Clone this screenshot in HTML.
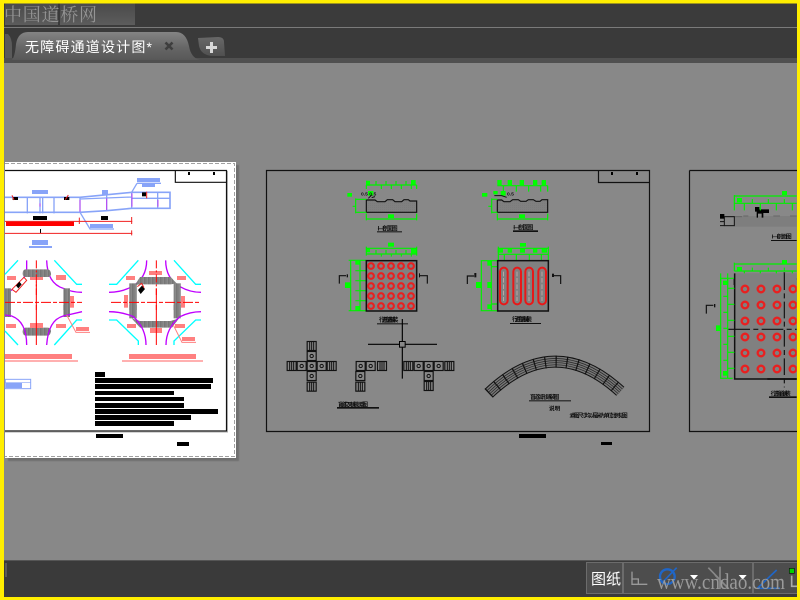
<!DOCTYPE html>
<html><head><meta charset="utf-8"><style>
html,body{margin:0;padding:0;background:#888}
body{width:800px;height:600px;overflow:hidden;position:relative}
svg{position:absolute;left:0;top:0;display:block}
text{font-family:"Liberation Sans","Noto Sans CJK SC",sans-serif}
g text{font-weight:700}
</style></head><body>
<svg width="800" height="600" viewBox="0 0 800 600" xmlns="http://www.w3.org/2000/svg">
<defs>
<linearGradient id="wm" x1="0" y1="0" x2="0" y2="1"><stop offset="0" stop-color="#4a4a4a"/><stop offset="1" stop-color="#5c5c5c"/></linearGradient>
<linearGradient id="tab" x1="0" y1="0" x2="0" y2="1"><stop offset="0" stop-color="#848484"/><stop offset=".55" stop-color="#666"/><stop offset="1" stop-color="#585858"/></linearGradient>
<linearGradient id="pl" x1="0" y1="0" x2="0" y2="1"><stop offset="0" stop-color="#686868"/><stop offset="1" stop-color="#505050"/></linearGradient>
<filter id="b"><feGaussianBlur stdDeviation="0.6"/></filter>
<pattern id="r1" x="318" y="288" width="30" height="30" patternUnits="userSpaceOnUse"><circle cx="15" cy="15" r="8.500" fill="none" stroke="#e82020" stroke-width="6.500"/></pattern>
<pattern id="r2" x="171" y="3" width="48" height="48" patternUnits="userSpaceOnUse"><circle cx="24" cy="24" r="10" fill="none" stroke="#e82020" stroke-width="7"/></pattern>
<pattern id="tex" width="6" height="6" patternUnits="userSpaceOnUse"><rect width="6" height="6" fill="#808080"/><rect x="1" y="1" width="2" height="2" fill="#767676"/></pattern>
<pattern id="vs2" width="4" height="4" patternUnits="userSpaceOnUse"><rect width="4" height="4" fill="#9a9a9a"/><rect width="2" height="4" fill="#666"/></pattern>
<g id="cell"><rect x="1.500" y="1.500" width="27" height="27" fill="none" stroke="#111" stroke-width="3.500"/><circle cx="15" cy="15" r="5" fill="none" stroke="#111" stroke-width="3"/></g>
<g id="hv"><rect x="1.500" y="1.500" width="27" height="27" fill="none" stroke="#111" stroke-width="3.500"/><path d="M9,2V28M15,2V28M21,2V28" stroke="#111" stroke-width="3"/></g>
</defs>

<rect width="800" height="600" fill="#888"/>

<!-- top bar -->
<rect x="0" y="0" width="800" height="27" fill="#3b3b3b"/>
<rect x="5" y="3" width="130" height="22" fill="url(#wm)"/>
<rect x="58" y="3" width="2" height="22" fill="#3a3a3a"/>
<text x="4" y="21" font-size="18" fill="#949494" textLength="93" style="font-family:'Noto Serif CJK SC','Liberation Serif',serif">中国道桥网</text>
<rect x="0" y="27" width="800" height="1" fill="#7a7a7a"/>
<rect x="0" y="28" width="800" height="30" fill="#3a3a3a"/>
<rect x="0" y="58" width="800" height="5" fill="#505050"/>
<path d="M5,34 L8,34 Q12,38 12,46 L12,58 L5,58Z" fill="#5a5a5a"/>
<path d="M12,60 Q15,56 16,44 Q18,32 28,32 L176,32 Q186,32 189,46 Q191,58 200,60 Z" fill="url(#tab)"/>
<text x="25" y="52" font-size="14" fill="#fff" textLength="127">无障碍通道设计图*</text>
<path d="M165.500,42.500 L172.500,49.500 M172.500,42.500 L165.500,49.500" stroke="#3e3e3e" stroke-width="2.600"/>
<path d="M198,38 L218,37 Q224,37 224,42 L225,56 L212,56 Q201,55 199,46Z" fill="url(#pl)"/>
<path d="M211.500,42 V53 M206,47.500 H217" stroke="#d8d8d8" stroke-width="3"/>

<!-- page 1 -->
<rect x="8" y="165" width="231" height="296" fill="#5e5e5e" opacity=".6" filter="url(#b)"/>
<rect x="5" y="162" width="231" height="296" fill="#fff"/>
<path d="M5,163.500 H234.500 V456.500 H5" fill="none" stroke="#a0a0a0" stroke-width="1" stroke-dasharray="4 2"/>
<path d="M5,170.500 H226.500 V431 H5" fill="none" stroke="#111" stroke-width="1.200"/>
<path d="M5,432 H227.500 V171" fill="none" stroke="#aaa" stroke-width="1"/>

<g transform="translate(0,155) scale(.33333)">
<path d="M526,48 V82 H680" fill="none" stroke="#111" stroke-width="3.500"/>
<rect x="564" y="51" width="6" height="9" fill="#000"/><rect x="639" y="51" width="6" height="9" fill="#000"/>
<g fill="#88a4f8">
<rect x="96" y="105" width="48" height="12"/><rect x="306" y="105" width="18" height="15"/>
<rect x="411" y="69" width="69" height="12"/><rect x="426" y="86" width="39" height="10"/>
<rect x="270" y="207" width="69" height="12"/><rect x="96" y="255" width="48" height="15"/><rect x="87" y="273" width="69" height="6"/>
</g>
<g fill="none" stroke="#88a4f8" stroke-width="4">
<path d="M15,127 H240 L395,112 H510 V160 H395 L320,167 L240,172 H15" stroke-width="5"/>
<path d="M82,128V175 M120,128V175 M128,128V175 M162,128V175 M240,128V172 M320,120V167 M395,112V160 M473,112V160 M395,130 H510 M240,132 L395,126"/>
<path d="M411,85 H483 M411,85 L395,112 M240,172 L270,222 H342"/>
</g>
<path d="M240,135V170 M320,130V165 M396,115V155 M474,135V155 M120,145V155" stroke="#c040f0" stroke-width="3" fill="none"/>
<g fill="#000"><rect x="99" y="183" width="42" height="12"/><rect x="303" y="183" width="21" height="12"/><rect x="120" y="222" width="3" height="13"/>
<rect x="38" y="126" width="16" height="9"/><rect x="192" y="126" width="16" height="9"/><rect x="426" y="112" width="12" height="12"/></g>
<rect x="18" y="200" width="204" height="13" fill="#ff0000"/>
<path d="M15,199 H397 M15,235 H397 M238,188V207 M395,186V207 M395,226V241 M36,121 L42,135 M205,120 L196,134 M440,110V130" stroke="#f02020" stroke-width="3" fill="none"/>
<g fill="none" stroke-width="4">
<path d="M54,316 L15,358 M163,316 L230,388 H246" stroke="#00ffff"/>
<path d="M80,316 V345 Q76,375 35,405 L15,413 M140,316 Q142,385 190,400 Q215,412 246,412" stroke="#c000ff"/>
<path d="M415,316 L350,388 H327 M522,316 L587,388 H603" stroke="#00ffff"/>
<path d="M440,316 Q440,370 395,395 Q365,412 327,412 M497,316 Q497,370 540,395 Q570,412 603,412" stroke="#c000ff"/>
</g>
<g fill="#ff8080">
<rect x="21" y="363" width="27" height="12"/><rect x="90" y="363" width="39" height="12"/><rect x="168" y="360" width="30" height="15"/><rect x="210" y="423" width="12" height="35"/>
<rect x="378" y="363" width="27" height="12"/><rect x="447" y="348" width="39" height="12"/><rect x="531" y="363" width="27" height="12"/><rect x="372" y="420" width="12" height="38"/><rect x="543" y="423" width="12" height="35"/>
</g>
<path d="M76,343 H144 Q154,345 153,360 Q150,366 144,366 H76 Q68,365 68,355 Q68,344 76,343Z" fill="url(#vs2)"/>
<rect x="15" y="400" width="18" height="65" fill="url(#vs2)"/><rect x="190" y="400" width="20" height="65" fill="url(#vs2)"/>
<path d="M420,366 H512 L530,385 L512,388 H420 L405,390Z" fill="url(#vs2)"/>
<rect x="388" y="385" width="22" height="80" fill="url(#vs2)"/><rect x="521" y="385" width="21" height="80" fill="url(#vs2)"/>
<path d="M36,403 L72,367 L80,376 L48,412Z" fill="#fff" stroke="#f02020" stroke-width="3"/>
<path d="M48,392 L58,380 L65,388 L55,400Z M414,405 L426,392 L435,402 L422,417Z" fill="#000"/>
<path d="M412,395 L425,385 L432,398" fill="none" stroke="#f02020" stroke-width="3"/>
<path d="M109,316 V420 M469,316 V420" stroke="#ff0000" stroke-width="3" stroke-dasharray="24 6 6 6" fill="none"/>
<path d="M15,442 H246 M333,442 H603" stroke="#ff0000" stroke-width="3" stroke-dasharray="30 6 12 6" fill="none"/>
<path d="M109,380 V465 M469,400 V465" stroke="#ff0000" stroke-width="3" fill="none"/>
</g>
<g transform="translate(0,305) scale(.33333)">
<rect x="15" y="0" width="18" height="36" fill="url(#vs2)"/><rect x="190" y="0" width="20" height="36" fill="url(#vs2)"/>
<rect x="388" y="0" width="22" height="40" fill="url(#vs2)"/><rect x="521" y="0" width="21" height="40" fill="url(#vs2)"/>
<path d="M76,68 H144 Q154,70 153,80 Q150,92 144,92 H76 Q68,90 68,80 Q68,70 76,68Z" fill="url(#vs2)"/>
<path d="M395,40 L420,48 H512 L537,40 L516,68 H420Z" fill="url(#vs2)"/>
<g fill="none" stroke-width="4">
<path d="M54,120 L15,78 M163,120 L230,45 H246 M415,120 V108 L350,45 H327 M522,120 V108 L587,45 H603" stroke="#00ffff"/>
<path d="M80,120 Q80,50 35,33 L15,30 M140,120 Q145,45 190,33 L246,20 M438,120 Q438,70 400,35 Q365,20 327,20 M498,120 Q498,70 540,35 Q570,20 603,20" stroke="#c000ff"/>
<path d="M200,30 L228,82 H270 M520,60 L546,112 H588" stroke="#ff8080" stroke-width="3"/>
</g>
<g fill="#ff8080">
<rect x="18" y="57" width="30" height="12"/><rect x="90" y="54" width="39" height="15"/><rect x="168" y="57" width="30" height="12"/>
<rect x="381" y="57" width="27" height="12"/><rect x="450" y="69" width="36" height="15"/><rect x="525" y="57" width="30" height="12"/>
<rect x="228" y="66" width="39" height="12"/><rect x="546" y="96" width="39" height="12"/>
<rect x="15" y="147" width="201" height="15"/><rect x="387" y="147" width="201" height="15"/>
</g>
<g fill="#ffb0b0"><rect x="15" y="165" width="219" height="6"/><rect x="366" y="165" width="243" height="6"/></g>
<path d="M109,0 V120 M469,0 V120" stroke="#ff0000" stroke-width="3" fill="none"/>
<rect x="212" y="-5" width="10" height="9" fill="#ff8080"/>
<rect x="16" y="223" width="76" height="28" fill="none" stroke="#88a4f8" stroke-width="3"/>
<path d="M15,232 H92" stroke="#88a4f8" stroke-width="2"/>
<rect x="18" y="234" width="48" height="15" fill="#88a4f8"/>
<g fill="#000">
<rect x="285" y="201" width="30" height="15"/><rect x="285" y="219" width="354" height="15"/><rect x="285" y="237" width="348" height="15"/>
<rect x="285" y="258" width="237" height="12"/><rect x="285" y="276" width="267" height="12"/><rect x="285" y="294" width="267" height="15"/>
<rect x="285" y="312" width="369" height="15"/><rect x="285" y="330" width="288" height="15"/><rect x="285" y="348" width="237" height="15"/>
<rect x="288" y="387" width="81" height="12"/><rect x="531" y="411" width="36" height="12"/>
</g>
</g>

<!-- middle frame -->
<path d="M266.500,170.500 H649.500 V431.500 H266.500Z" fill="none" stroke="#111" stroke-width="1.200"/>
<path d="M598.500,170.500 V182.500 H649.500" fill="none" stroke="#111" stroke-width="1.200"/>
<rect x="611" y="172" width="2" height="3" fill="#000"/><rect x="636" y="172" width="2" height="3" fill="#000"/>

<g transform="translate(260,165) scale(.33333)">
<path d="M319,142 V105 H345 L352,110 H375 L382,104 H398 L405,110 H425 L432,104 H445 L450,108 H470 V142Z" fill="url(#tex)" stroke="#111" stroke-width="3.500"/>
<g fill="#00ff00">
<rect x="318" y="47" width="12" height="15"/><rect x="453" y="45" width="14" height="15"/><rect x="324" y="78" width="16" height="14"/><rect x="262" y="84" width="14" height="11"/>
<rect x="384" y="148" width="18" height="11"/><rect x="384" y="233" width="18" height="12"/><rect x="318" y="250" width="12" height="12"/><rect x="453" y="250" width="17" height="15"/>
<rect x="286" y="287" width="14" height="12"/><rect x="286" y="423" width="14" height="13"/><rect x="255" y="352" width="16" height="17"/>
</g>
<g fill="none" stroke="#00f000" stroke-width="3.500">
<path d="M319,60 H470 M348,48V60 M378,48V60 M408,48V60 M438,48V60 M319,60V72 M364,60V72 M394,60V72 M424,60V72 M454,60V72 M470,60V72"/>
<path d="M287,100 V145 M278,124 H287 M287,103 H319 M287,142 H319"/>
<path d="M319,162 H470 M319,146 V166 M470,146 V166"/>
<path d="M319,250 H470 M319,267 H470 M319,245 V272 M470,245 V272 M348,255V267 M378,255V267 M408,255V267 M438,255V267 M364,267V275 M394,267V275 M424,267V275 M454,267V275"/>
<path d="M272,285 V438 M266,286 H319 M266,437 H319 M300,287 V437 M286,317 H318 M286,347 H318 M286,377 H318 M286,407 H318"/>
</g>
<path d="M325,100 L335,90 M345,95 L335,98" stroke="#111" stroke-width="3" fill="none"/>
<text x="303" y="92" font-size="15" fill="#111">0.5  0.5</text>
<text x="353" y="196" font-size="18" fill="#111" textLength="60">I—I剖面图</text>
<rect x="351" y="199" width="75" height="3" fill="#111"/>
<rect x="319" y="287" width="151" height="151" fill="#808080"/>
<rect x="318" y="288" width="150" height="150" fill="url(#r1)"/>
<rect x="319" y="287" width="151" height="151" fill="none" stroke="#111" stroke-width="4.500"/>
<path d="M238,356 V332 H258 M478,332 H502 V356" fill="none" stroke="#111" stroke-width="3.500"/>
<rect x="260" y="328" width="4" height="9" fill="#111"/><rect x="477" y="325" width="3" height="12" fill="#111"/>
<text x="357" y="471" font-size="18" fill="#111" textLength="58">行进盲道铺装</text>
<rect x="351" y="475" width="93" height="3" fill="#111"/>
</g>

<g transform="translate(460,165) scale(.33333)">
<path d="M112,142 V105 H125 L132,110 H150 L158,104 H175 L182,109 H198 L205,104 H220 L228,109 H240 L246,104 H263 V142Z" fill="url(#tex)" stroke="#111" stroke-width="3.500"/>
<g fill="#00ff00">
<rect x="112" y="45" width="13" height="15"/><rect x="143" y="45" width="13" height="15"/><rect x="179" y="45" width="13" height="15"/><rect x="219" y="45" width="13" height="15"/><rect x="245" y="45" width="13" height="15"/>
<rect x="122" y="78" width="15" height="14"/><rect x="66" y="84" width="16" height="11"/><rect x="100" y="78" width="13" height="10"/>
<rect x="177" y="148" width="18" height="11"/><rect x="180" y="234" width="18" height="11"/>
<rect x="113" y="250" width="16" height="13"/><rect x="143" y="250" width="13" height="13"/><rect x="180" y="250" width="15" height="13"/><rect x="219" y="250" width="13" height="13"/><rect x="245" y="250" width="16" height="13"/>
<rect x="82" y="288" width="13" height="14"/><rect x="48" y="351" width="17" height="18"/><rect x="82" y="351" width="13" height="18"/><rect x="82" y="418" width="13" height="14"/>
</g>
<g fill="none" stroke="#00f000" stroke-width="3.500">
<path d="M112,62 H263 M130,62V80 M169,62V80 M206,62V80 M242,62V80 M263,62V80"/>
<path d="M95,100 V145 M85,124 H95 M95,103 H112 M95,142 H112"/>
<path d="M112,162 H263 M112,146 V166 M263,146 V166"/>
<path d="M115,250 H265 M115,268 H265 M115,245 V285 M265,245 V285 M133,268V285 M169,268V285 M208,268V285 M244,268V285"/>
<path d="M64,287 V438 M62,287 H112 M62,437 H112 M94,287 V437 M94,305 H112 M94,417 H112"/>
</g>
<path d="M103,92 H125 L140,97" stroke="#111" stroke-width="3" fill="none"/>
<text x="141" y="92" font-size="15" fill="#111">0.5</text>
<text x="160" y="194" font-size="18" fill="#111" textLength="60">I—I剖面图</text>
<rect x="159" y="196" width="75" height="5" fill="#111"/>
<rect x="113" y="287" width="152" height="151" fill="#808080" stroke="#111" stroke-width="4.500"/>
<g fill="none" stroke="#e81818" stroke-width="6">
<rect x="120" y="308" width="23" height="110" rx="11.500"/><rect x="160" y="308" width="23" height="110" rx="11.500"/><rect x="196" y="308" width="23" height="110" rx="11.500"/><rect x="235" y="308" width="23" height="110" rx="11.500"/>
</g>
<path d="M131,320V408 M171,320V408 M207,320V408 M246,320V408" stroke="#d8b8b8" stroke-width="2" stroke-dasharray="14 5" fill="none"/>
<path d="M22,357 V333 H42 M278,332 H302 V357" fill="none" stroke="#111" stroke-width="3.500"/>
<rect x="43" y="324" width="6" height="13" fill="#111"/><rect x="276" y="326" width="6" height="10" fill="#111"/>
<text x="156" y="470" font-size="18" fill="#111" textLength="60">行进盲道铺装</text>
<rect x="150" y="474" width="93" height="3" fill="#111"/>
</g>

<g transform="translate(260,325) scale(.33333)">
<path d="M324,58 H418 M436,58 H531 M427,-18 V49 M427,67 V161" stroke="#000" stroke-width="3.500" fill="none"/>
<rect x="418.500" y="49.500" width="17" height="17" fill="none" stroke="#000" stroke-width="3"/>
<use href="#cell" x="110" y="108"/><use href="#cell" x="140" y="108"/><use href="#cell" x="170" y="108"/><use href="#cell" x="140" y="78"/><use href="#cell" x="140" y="138"/>
<use href="#hv" x="80" y="108"/><use href="#hv" x="200" y="108"/><use href="#hv" x="140" y="48"/><use href="#hv" x="140" y="170"/>
<use href="#cell" x="287" y="108"/><use href="#cell" x="317" y="108"/><use href="#hv" x="351" y="108"/><use href="#cell" x="286" y="138"/><use href="#hv" x="286" y="170"/>
<use href="#hv" x="430" y="108"/><use href="#cell" x="461" y="108"/><use href="#cell" x="491" y="108"/><use href="#cell" x="521" y="108"/><use href="#hv" x="553" y="108"/><use href="#cell" x="491" y="138"/><use href="#hv" x="491" y="168"/>
<text x="234" y="244" font-size="17" fill="#111" textLength="90">盲道交叉铺装示意图</text>
<rect x="231" y="246" width="126" height="5" fill="#111"/>
</g>

<g transform="translate(460,325) scale(.33333)" fill="none">
<path d="M86,205 Q283,18 481,199" stroke="#111" stroke-width="36"/>
<path d="M86,205 Q283,18 481,199" stroke="#777" stroke-width="30"/>
<path d="M86,205 Q283,18 481,199" stroke="#222" stroke-width="21"/>
<path d="M86,205 Q283,18 481,199" stroke="#777" stroke-width="17"/>
<path d="M86,205 Q283,18 481,199" stroke="#222" stroke-width="8"/>
<path d="M86,205 Q283,18 481,199" stroke="#777" stroke-width="4"/>
<path d="M86,205 Q283,18 481,199" stroke="#111" stroke-width="36" stroke-dasharray="3.500 29"/>
<text x="210" y="222" font-size="17" fill="#111" stroke="none" textLength="88">盲道弧形铺装图</text>
<rect x="207" y="226" width="126" height="3" fill="#111" stroke="none"/>
<text x="267" y="256" font-size="17" fill="#111" stroke="none">说明</text>
<text x="328" y="277" font-size="17" fill="#111" stroke="none" textLength="175">1.本图尺寸均以毫米为单位,比例见图</text>
<rect x="177" y="327" width="81" height="12" fill="#000" stroke="none"/>
<rect x="423" y="351" width="33" height="9" fill="#000" stroke="none"/>
</g>

<path d="M689.500,170.500 H800 M689.500,170.500 V431.500 H800" fill="none" stroke="#111" stroke-width="1.200"/>
<g transform="translate(680,165) scale(.33333)">
<rect x="163" y="153" width="187" height="32" fill="#7e7e7e"/>
<path d="M133,155 H186 M190,153 H205 M280,153 H300 M330,153 H350" stroke="#666" stroke-width="3" fill="none"/>
<rect x="133" y="155" width="30" height="27" fill="none" stroke="#111" stroke-width="3"/>
<path d="M120,170 H133 M120,182 H133" stroke="#111" stroke-width="3"/>
<rect x="120" y="147" width="13" height="14" fill="#000"/>
<path d="M225,126 H238 V133 H267 V144 H250 V158 H245 V146 H234 V158 H230 V140 H225Z" fill="#000"/>
<g fill="none" stroke="#00f000" stroke-width="3.500">
<path d="M163,93 H350 M163,90V136 M163,115 H350 M193,115V136 M241,115V136 M289,115V136 M337,115V136 M217,102V115 M265,102V115 M313,102V115"/>
<path d="M163,297 H350 M163,318 H350 M163,293V318 M193,318V340 M241,318V340 M289,318V340 M337,318V340 M217,308V318 M265,308V318 M313,308V318"/>
<path d="M120,340 H165 M122,340 V360 M143,340 V360"/>
</g>
<g fill="#00ff00"><rect x="171" y="99" width="15" height="13"/><rect x="306" y="78" width="15" height="12"/><rect x="306" y="285" width="15" height="12"/><rect x="171" y="306" width="15" height="12"/><rect x="129" y="348" width="14" height="12"/></g>
<text x="275" y="221" font-size="17" fill="#111" textLength="60">I—I剖面图</text>
<rect x="273" y="225" width="77" height="3" fill="#111"/>
<path d="M163,342 H350 M313,322 V342" stroke="#111" stroke-width="4.500" fill="none"/>
<path d="M163,342 V360" stroke="#111" stroke-width="4.500"/>
</g>
<g transform="translate(680,280) scale(.33333)">
<rect x="164" y="-20" width="186" height="317" fill="#808080"/>
<rect x="171" y="3" width="179" height="288" fill="url(#r2)"/>
<path d="M164,-20 V297 H350" fill="none" stroke="#111" stroke-width="4.500"/>
<path d="M262,297 H350" stroke="#111" stroke-width="5"/>
<path d="M145,148 H350" stroke="#111" stroke-width="3.500" stroke-dasharray="65 10 15 10"/>
<path d="M313,-20 V322" stroke="#111" stroke-width="3.500" stroke-dasharray="50 10 15 10"/>
<g fill="none" stroke="#00f000" stroke-width="3.500">
<path d="M122,-20 V295 M120,295 H158 M143,-20 V295 M143,25 H163 M143,73 H163 M143,121 H163 M143,169 H163 M143,217 H163 M143,265 H163 M130,49 H143 M130,97 H143 M130,145 H143 M130,193 H143 M130,241 H143"/>
</g>
<g fill="#00ff00"><rect x="129" y="2" width="12" height="13"/><rect x="108" y="136" width="13" height="17"/><rect x="129" y="273" width="12" height="14"/></g>
<path d="M79,101 V76 H100" fill="none" stroke="#111" stroke-width="3.500"/>
<rect x="102" y="72" width="4" height="10" fill="#111"/>
<text x="272" y="346" font-size="17" fill="#111" textLength="60">行进盲道铺装</text>
<rect x="267" y="349" width="83" height="5" fill="#111"/>
</g>

<!-- bottom bar -->
<rect x="0" y="560" width="800" height="40" fill="#3a3a3a"/>
<rect x="0" y="560" width="800" height="1" fill="#555"/>
<rect x="5" y="563" width="2" height="14" fill="#5a5a5a"/>
<rect x="586.500" y="562.500" width="36" height="31" fill="#4d4d4d" stroke="#6c6c6c"/>
<rect x="623.500" y="562.500" width="129" height="31" fill="#4d4d4d" stroke="#6c6c6c"/>
<rect x="753.500" y="562.500" width="50" height="31" fill="#4d4d4d" stroke="#6c6c6c"/>
<text x="591" y="584" font-size="15" fill="#fff" textLength="30">图纸</text>
<g transform="translate(580,555) scale(.33333)">
<path d="M156,50 V88 H202 M156,72 H175 V88" fill="none" stroke="#9a9a9a" stroke-width="4"/>
<circle cx="262" cy="65" r="22" fill="none" stroke="#1f66c8" stroke-width="7"/>
<path d="M245,85 L290,38" stroke="#1f66c8" stroke-width="5"/>
<path d="M330,60 H354 L342,74Z M476,60 H500 L488,74Z" fill="#fff"/>
<path d="M385,38 L445,100 M420,35 V102 M405,60 L445,100" stroke="#888" stroke-width="5" fill="none"/>
<path d="M532,100 L590,45 M532,100 H600" stroke="#1f66c8" stroke-width="5" fill="none"/>
<rect x="628" y="40" width="15" height="15" fill="#00d000" stroke="#111" stroke-width="2"/>
<path d="M635,62 V94 H660" fill="none" stroke="#aaa" stroke-width="5"/>
</g>
<text x="657" y="589" font-size="22" fill="#9a9a9a" textLength="128" lengthAdjust="spacingAndGlyphs" style="font-family:'Liberation Serif',serif">www.cndao.com</text>

<!-- yellow border -->
<path d="M0,0 H800 V600 H0Z M4,3.500 V597 H797 V3.500Z" fill="#ffee00" fill-rule="evenodd"/>
</svg>
</body></html>
